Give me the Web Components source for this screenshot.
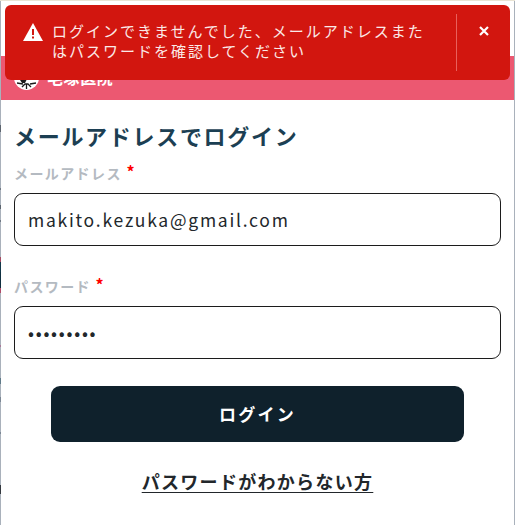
<!DOCTYPE html>
<html lang="ja">
<head>
<meta charset="utf-8">
<title>ログイン</title>
<style>
  html, body { margin: 0; height: 100%; }
  body {
    overflow: hidden;
    font-family: "Noto Sans CJK JP", "Noto Sans", sans-serif;
    background:
      linear-gradient(#e9e4d4, #e9e4d4) 0 0 / 100% 1px no-repeat,
      linear-gradient(to bottom,
        #a9b1bb 0 125px, #5c646e 125px 132px, #a9b1bb 132px 188px, #6f7884 188px 190px,
        #a9b1bb 190px 205px, #5c646e 205px 209px, #a9b1bb 209px 220px, #6f7884 220px 222px,
        #a9b1bb 222px 257px, #a34a62 257px 262px, #12384a 262px 272px, #0f2f40 272px 288px,
        #b04a68 288px 293px, #a9b1bb 293px 345px, #a87a98 345px 347px, #a9b1bb 347px 378px,
        #5f7a88 378px 384px, #a9b1bb 384px 397px, #7b8794 397px 402px, #a9b1bb 402px 432px,
        #7b8794 432px 434px, #a9b1bb 434px 485px, #33383e 485px 494px, #a9b1bb 494px) 0 0 / 1px 100% no-repeat,
      #a9b1bb;
  }
</style>
</head>
<body>
<login-page>
  <hospital-header slot="header">毛塚医院</hospital-header>
  <login-form slot="form"></login-form>
</login-page>
<error-toast>ログインできませんでした、メールアドレスまたはパスワードを確認してください</error-toast>

<script>
class LoginPage extends HTMLElement {
  constructor() {
    super();
    const shadow = this.attachShadow({ mode: 'open' });
    shadow.innerHTML = `
      <style>
        :host { display: block; height: 525px; box-sizing: border-box; padding: 1px 1px 0 1px; }
        main { background: #fff; height: 100%; padding-top: 55px; box-sizing: border-box; }
      </style>
      <main>
        <slot name="header"></slot>
        <slot name="form"></slot>
      </main>
    `;
  }
}

class HospitalHeader extends HTMLElement {
  constructor() {
    super();
    const shadow = this.attachShadow({ mode: 'open' });
    shadow.innerHTML = `
      <style>
        :host { display: flex; align-items: center; gap: 8px; height: 44px; padding-left: 13px; background: #ec5871; color: #fff; font-size: 16px; font-weight: 700; letter-spacing: .6px; }
        svg { width: 25px; height: 25px; flex: none; margin-top: -1px; }
        span { margin-top: -2px; }
      </style>
      <svg viewBox="0 0 25 25">
        <circle cx="12.500" cy="12.500" r="12.500" fill="#fff"/>
        <path d="M6 8h6l1 6-2 4H8l-2-3z" fill="#1a1a1a"/>
        <path d="M15 7h5l1 4h-6z" fill="#e9a83c"/>
        <path d="M3 18l6 1M22 18l-6 1M8 22l3-3h3l3 3M12.500 19v5" stroke="#1a1a1a" stroke-width="1.300" fill="none"/>
      </svg>
      <span><slot></slot></span>
    `;
  }
}

class ErrorToast extends HTMLElement {
  constructor() {
    super();
    const shadow = this.attachShadow({ mode: 'open' });
    shadow.innerHTML = `
      <style>
        :host { position: absolute; left: 5px; top: 5px; width: 505px; height: 75px; box-sizing: border-box; display: flex; align-items: flex-start; background: #d2160f; border-radius: 6px; color: #fff; }
        svg.warn { width: 20px; height: 18px; margin: 18px 0 0 18px; flex: none; }
        .msg { margin: 16px 0 0 9px; width: 378px; font-size: 15px; font-weight: 400; line-height: 20px; letter-spacing: 2px; flex: none; color: #fbe9e7; }
        .sep { margin: 9px 0 0 26px; width: 1px; height: 57px; background: #e8605c; flex: none; }
        button { flex: 1; background: none; border: 0; padding: 0; margin-top: 21px; height: 10px; display: flex; align-items: center; justify-content: center; }
        button svg { width: 10px; height: 10px; }
      </style>
      <svg class="warn" viewBox="0 0 20 18">
        <path d="M10 0 20 18H0Z" fill="#fff"/>
        <path d="M9 6h2v6H9zM9 13.500h2v2H9z" fill="#d2160f"/>
      </svg>
      <div class="msg"><slot></slot></div>
      <div class="sep"></div>
      <button aria-label="閉じる">
        <svg viewBox="0 0 10 10"><path d="M1 1 9 9M9 1 1 9" stroke="#fff" stroke-width="2.200"/></svg>
      </button>
    `;
  }
}

class FormField extends HTMLElement {
  constructor() {
    super();
    const shadow = this.attachShadow({ mode: 'open' });
    shadow.innerHTML = `
      <style>
        :host { display: block; }
        label { display: block; height: 20px; line-height: 20px; font-size: 14px; font-weight: 700; color: #b4bac1; letter-spacing: 1.4px; }
        label span { color: #f00; font-size: 16px; line-height: 16px; vertical-align: 1px; }
        .box { margin-top: 10px; height: 53px; box-sizing: border-box; border: 1px solid #1c1c1c; border-radius: 9px; padding-left: 13px; display: flex; align-items: center; font-size: 17.500px; letter-spacing: 1.75px; color: #22272b; }
      </style>
      <label><slot name="label"></slot> <span>*</span></label>
      <div class="box"><slot></slot></div>
    `;
  }
}

class LoginForm extends HTMLElement {
  constructor() {
    super();
    const shadow = this.attachShadow({ mode: 'open' });
    shadow.innerHTML = `
      <style>
        :host { display: block; padding: 0 13px; }
        h1 { margin: 15px 0 0; height: 40px; line-height: 40px; font-size: 22px; font-weight: 700; color: #1c3f53; letter-spacing: 1.7px; }
        .fields { display: flex; flex-direction: column; gap: 30px; margin-top: 8px; }
        .login { display: block; margin: 27px 37px 0; width: 413px; height: 56px; padding: 0 0 2px; background: #0f212c; border: 0; border-radius: 9px; color: #fff; font: 700 17px "Noto Sans CJK JP", sans-serif; letter-spacing: 2.200px; }
        .forgot { display: block; margin-top: 26px; text-align: center; font-size: 18px; font-weight: 700; letter-spacing: 1.3px; color: #22272b; text-decoration: underline; text-underline-offset: 3px; }
      </style>
      <h1>メールアドレスでログイン</h1>
      <div class="fields">
        <form-field><span slot="label">メールアドレス</span>makito.kezuka@gmail.com</form-field>
        <form-field><span slot="label">パスワード</span>•••••••••</form-field>
      </div>
      <button class="login">ログイン</button>
      <a class="forgot">パスワードがわからない方</a>
    `;
  }
}

customElements.define('login-page', LoginPage);
customElements.define('hospital-header', HospitalHeader);
customElements.define('error-toast', ErrorToast);
customElements.define('form-field', FormField);
customElements.define('login-form', LoginForm);
</script>
</body>
</html>
